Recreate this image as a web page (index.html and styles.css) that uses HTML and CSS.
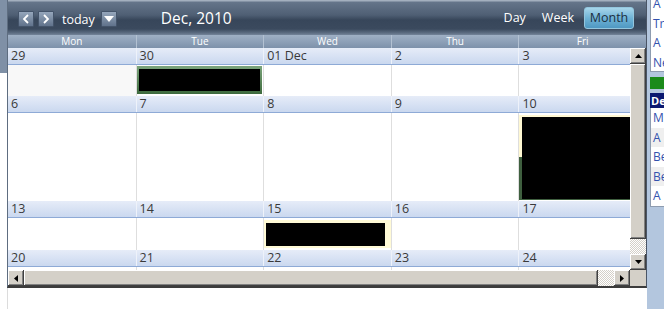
FILE: index.html
```html
<!DOCTYPE html>
<html lang="en">
<head>
    <meta charset="UTF-8">
    <meta name="viewport" content="width=device-width, initial-scale=1.0">
    <title>Calendar - Dec, 2010</title>
    <link rel="stylesheet" href="styles.css">
</head>
<body>
    <div id="page">
        <div id="edge"><div class="edge-top"></div></div>
        <div id="main">
            <div id="calendar">
                <div class="toolbar">
                    <button class="tb-btn">
                        <svg width="8" height="10" viewBox="0 0 8 10"><path d="M6 1 L2 5 L6 9" fill="none" stroke="#fff" stroke-width="1.8"/></svg>
                    </button>
                    <button class="tb-btn">
                        <svg width="8" height="10" viewBox="0 0 8 10"><path d="M2 1 L6 5 L2 9" fill="none" stroke="#fff" stroke-width="1.8"/></svg>
                    </button>
                    <span class="today">today</span>
                    <button class="tb-btn">
                        <svg width="10" height="6" viewBox="0 0 10 6"><path d="M0 0 H10 L5 6 Z" fill="#fff"/></svg>
                    </button>
                    <div class="title">Dec, 2010</div>
                    <div class="views">
                        <span class="view">Day</span>
                        <span class="view">Week</span>
                        <span class="view active">Month</span>
                    </div>
                </div>
                <div class="dayhead">
                    <div>Mon</div>
                    <div>Tue</div>
                    <div>Wed</div>
                    <div>Thu</div>
                    <div>Fri</div>
                </div>
                <div class="scroller">
                    <div class="viewport">
                        <div class="week">
                            <div class="dates">
                                <div>29</div><div>30</div><div>01 Dec</div><div>2</div><div>3</div>
                            </div>
                            <div class="cells">
                                <div class="cell other"></div>
                                <div class="cell"><div class="event ev-green"><div class="ev-hidden"></div></div></div>
                                <div class="cell"></div>
                                <div class="cell"></div>
                                <div class="cell"></div>
                            </div>
                        </div>
                        <div class="week">
                            <div class="dates">
                                <div>6</div><div>7</div><div>8</div><div>9</div><div>10</div>
                            </div>
                            <div class="cells">
                                <div class="cell"></div>
                                <div class="cell"></div>
                                <div class="cell"></div>
                                <div class="cell"></div>
                                <div class="cell"><div class="event ev-tall"><div class="ev-hidden"></div></div></div>
                            </div>
                        </div>
                        <div class="week">
                            <div class="dates">
                                <div>13</div><div>14</div><div>15</div><div>16</div><div>17</div>
                            </div>
                            <div class="cells">
                                <div class="cell"></div>
                                <div class="cell"></div>
                                <div class="cell"><div class="event ev-yellow"><div class="ev-hidden"></div></div></div>
                                <div class="cell"></div>
                                <div class="cell"></div>
                            </div>
                        </div>
                        <div class="week">
                            <div class="dates">
                                <div>20</div><div>21</div><div>22</div><div>23</div><div>24</div>
                            </div>
                            <div class="cells empty">
                                <div class="cell"></div>
                                <div class="cell"></div>
                                <div class="cell"></div>
                                <div class="cell"></div>
                                <div class="cell"></div>
                            </div>
                        </div>
                    </div>
                    <div class="vscroll">
                        <div class="sb-btn">
                            <svg width="7" height="4" viewBox="0 0 7 4"><path d="M3.5 0 L7 4 H0 Z" fill="#000"/></svg>
                        </div>
                        <div class="sb-thumb"></div>
                        <div class="sb-track"></div>
                        <div class="sb-btn">
                            <svg width="7" height="4" viewBox="0 0 7 4"><path d="M0 0 H7 L3.5 4 Z" fill="#000"/></svg>
                        </div>
                    </div>
                    <div class="hscroll">
                        <div class="sb-btn">
                            <svg width="4" height="7" viewBox="0 0 4 7"><path d="M4 0 V7 L0 3.5 Z" fill="#000"/></svg>
                        </div>
                        <div class="sb-thumb"></div>
                        <div class="sb-track"></div>
                        <div class="sb-btn">
                            <svg width="4" height="7" viewBox="0 0 4 7"><path d="M0 0 L4 3.5 L0 7 Z" fill="#000"/></svg>
                        </div>
                    </div>
                    <div class="corner"></div>
                </div>
            </div>
            <div class="below"></div>
        </div>
        <div id="side">
            <div class="side-box top-box">
                <div class="side-list shifted">
                    <div class="side-item">A</div>
                    <div class="side-item">Tr</div>
                    <div class="side-item">A</div>
                    <div class="side-item">Ne</div>
                </div>
            </div>
            <div class="green-bar"></div>
            <div class="navy-head">De</div>
            <div class="side-box">
                <div class="side-list">
                    <div class="side-item">M.</div>
                    <div class="side-item alt">A</div>
                    <div class="side-item">Be</div>
                    <div class="side-item alt">Be</div>
                    <div class="side-item">A</div>
                </div>
            </div>
        </div>
    </div>
</body>
</html>
```

FILE: styles.css
```css
body {
    margin: 0;
    background-color: #fff;
    font-family: "Open Sans", "Liberation Sans", sans-serif;
}
#page {
    display: flex;
    width: 664px;
    height: 309px;
    overflow: hidden;
}
#edge {
    width: 7px;
    flex: none;
}
.edge-top {
    height: 73px;
    background-color: #7f90a6;
}
#main {
    width: 640px;
    flex: none;
    display: flex;
    flex-direction: column;
}
#calendar {
    border-left: 1px solid #5e6d80;
    border-right: 1px solid #4a5566;
    border-bottom: 2px solid #3c3c3c;
}
.below {
    flex: 1;
    border-left: 1px solid #dcdcdc;
}

/* toolbar */
.toolbar {
    height: 35px;
    box-sizing: border-box;
    display: flex;
    align-items: center;
    padding: 3px 12px 0 10px;
    background: linear-gradient(#a3afbe 0, #a3afbe 1px, #65758a 2px, #4f5f74 15px, #37465a 20px, #3b4a5e 29px, #5d6d82 33px, #74859b 35px);
}
.tb-btn {
    width: 16px;
    height: 16px;
    padding: 0;
    margin-right: 4px;
    border: 1px solid #44546a;
    border-radius: 1px;
    background: linear-gradient(#95a6bb, #60728b);
    display: flex;
    align-items: center;
    justify-content: center;
}
.today {
    color: #fff;
    font-size: 12.5px;
    margin: 0 6px 0 4px;
}
.title {
    color: #fff;
    font-size: 15.5px;
    margin-left: 40px;
    margin-top: -2px;
}
.views {
    margin-left: auto;
    display: flex;
    align-items: center;
    margin-top: -3px;
}
.view {
    color: #fff;
    font-size: 12.5px;
    margin-left: 16px;
}
.view.active {
    margin-left: 10px;
    width: 50px;
    height: 22px;
    box-sizing: border-box;
    line-height: 20px;
    text-align: center;
    color: #1c2e3e;
    border: 1px solid #93c6de;
    border-radius: 3px;
    background: linear-gradient(#a6d5ea, #6fb3d6 50%, #4f98c2);
}

/* day names */
.dayhead {
    display: grid;
    grid-template-columns: repeat(5, 1fr);
    height: 13px;
    background: linear-gradient(#9fb0c5, #7d91aa);
    color: #fff;
    font-size: 10px;
    line-height: 13px;
    text-align: center;
}
.dayhead div + div {
    border-left: 1px solid #b3c1d2;
}

/* scrolling body */
.scroller {
    display: grid;
    grid-template-columns: 622px 16px;
    grid-template-rows: 222px 16px;
}
.viewport {
    overflow: hidden;
    background-color: #fff;
}
.week {
    width: 638px;
}
.dates {
    display: grid;
    grid-template-columns: repeat(5, 1fr);
    height: 17px;
    box-sizing: border-box;
    border-bottom: 1px solid #8eaad6;
    background: linear-gradient(#e6ecf8, #cad8ef);
    color: #3a3a3a;
    font-size: 12.5px;
    line-height: 16px;
}
.dates div {
    padding-left: 3px;
}
.dates div + div {
    border-left: 1px solid #eef2fa;
}
.cells {
    display: grid;
    grid-template-columns: repeat(5, 1fr);
}
.cells.empty {
    height: 40px;
}
.cell + .cell {
    border-left: 1px solid #dedede;
}
.cell.other {
    background-color: #f8f8f8;
}
.event {
    box-sizing: border-box;
}
.ev-hidden {
    background-color: #000;
    height: 100%;
}
.ev-green {
    height: 28px;
    margin: 1px 1px 2px 0;
    padding: 3px 2px 3px 2px;
    background: linear-gradient(#7ca57c, #3d6a3d);
}
.ev-tall {
    height: 85px;
    margin: 2px 0 1px 0;
    padding: 2px 0 1px 3px;
    background: linear-gradient(#fff8d2 0, #fff8d2 50%, #3f5f3f 50%);
}
.ev-yellow {
    height: 28px;
    margin: 2px 0 2px 0;
    padding: 3px 6px 2px 2px;
    background-color: #fffad6;
}

/* scrollbars */
.vscroll {
    display: flex;
    flex-direction: column;
}
.hscroll {
    display: flex;
}
.sb-btn, .sb-thumb, .corner {
    background-color: #d4d0c8;
    box-shadow: inset -1px -1px #404040, inset 1px 1px #fff, inset -2px -2px #808080;
}
.sb-btn {
    width: 16px;
    height: 16px;
    flex: none;
    display: flex;
    align-items: center;
    justify-content: center;
}
.vscroll .sb-thumb {
    flex: 1;
}
.hscroll .sb-thumb {
    width: 574px;
    flex: none;
}
.sb-track {
    flex: none;
    width: 16px;
    height: 16px;
    background: repeating-conic-gradient(#fff 0 25%, #d4d0c8 0 50%) 0 0 / 2px 2px;
}
.vscroll .sb-track {
    height: 15px;
}
.corner {
    box-shadow: none;
}

/* side panel */
#side {
    flex: 1;
    background-color: #b3c6de;
    padding-left: 3px;
    display: flex;
    flex-direction: column;
    min-width: 0;
}
.side-box {
    background-color: #fff;
    border-left: 1px solid #8e9cb0;
    border-bottom: 1px solid #8e9cb0;
    overflow: hidden;
}
.top-box {
    height: 72px;
    box-sizing: border-box;
}
.side-list.shifted {
    margin-top: -6px;
}
.side-item {
    height: 19.5px;
    line-height: 19.5px;
    padding-left: 2px;
    color: #3452ae;
    font-size: 12px;
    white-space: nowrap;
}
.side-item.alt {
    background-color: #efefef;
}
.green-bar {
    height: 12px;
    margin-top: 5px;
    background-color: #1b8b1b;
}
.navy-head {
    height: 15px;
    margin-top: 4px;
    line-height: 15px;
    padding-left: 1px;
    background-color: #0b1870;
    color: #fff;
    font-size: 11px;
    font-weight: bold;
    white-space: nowrap;
    overflow: hidden;
}
```
